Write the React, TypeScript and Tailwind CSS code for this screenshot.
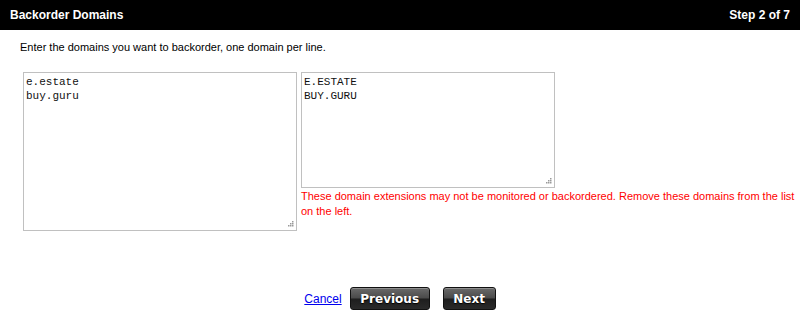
import React from 'react';

const Button: React.FC<{ label: string; width: string }> = ({ label, width }) => (
  <button
    type="button"
    className={`${width} h-[23px] rounded-[3px] border border-[#111] bg-[linear-gradient(to_bottom,#6a6a6a_0%,#4a4a4a_48%,#1e1e1e_52%,#2a2a2a_100%)] text-white text-[12px] font-bold leading-none shadow-[inset_0_1px_0_rgba(255,255,255,0.25)] [text-shadow:0_1px_1px_#000]`}
    style={{ fontFamily: '"DejaVu Sans", Verdana, sans-serif' }}
  >
    {label}
  </button>
);

// dotted resize grip, like the old Windows textarea corner
const Grip: React.FC = () => (
  <svg width="7" height="7" viewBox="0 0 7 7" className="absolute right-[3px] bottom-[3px] pointer-events-none">
    {[
      [5, 0],
      [3, 2],
      [5, 2],
      [1, 4],
      [3, 4],
      [5, 4],
    ].map(([x, y]) => (
      <rect key={`${x}-${y}`} x={x} y={y} width="1.5" height="1.5" fill="#9a9a9a" />
    ))}
  </svg>
);

const Box: React.FC<{ value: string; size: string }> = ({ value, size }) => (
  <div className={`relative ${size}`}>
    <textarea
      defaultValue={value}
      className="w-full h-full border border-[#c0c0c0] p-[2px] text-[11px] leading-[14px] text-[#111] outline-none resize-none block"
      style={{ fontFamily: '"Liberation Mono", "Courier New", monospace' }}
    />
    <Grip />
  </div>
);

const App: React.FC = () => {
  return (
    <div
      className="w-[800px] h-[318px] bg-white text-black"
      style={{ fontFamily: '"Liberation Sans", Arial, sans-serif' }}
    >
      {/* Header bar */}
      <div className="h-[30px] bg-black flex items-center justify-between px-[10px] text-white text-[12px] font-bold">
        <span>Backorder Domains</span>
        <span>Step 2 of 7</span>
      </div>

      <p className="pl-[20px] pt-[10px] text-[11px] leading-[14px]">
        Enter the domains you want to backorder, one domain per line.
      </p>

      <div className="flex items-start gap-[4px] pl-[23px] pt-[18px]">
        <Box value={'e.estate\nbuy.guru'} size="w-[274px] h-[159px]" />
        <div className="flex flex-col w-[497px]">
          <Box value={'E.ESTATE\nBUY.GURU'} size="w-[254px] h-[116px]" />
          <p className="text-[11px] leading-[15px] text-[#ff0000] mt-[1px]">
            These domain extensions may not be monitored or backordered. Remove these domains from the list on the left.
          </p>
        </div>
      </div>

      {/* Navigation */}
      <div className="flex items-center justify-center pt-[56px]">
        <a href="#" className="text-[12px] text-[#0000ee] underline mr-[8px]">
          Cancel
        </a>
        <Button label="Previous" width="w-[80px]" />
        <span className="w-[13px]" />
        <Button label="Next" width="w-[53px]" />
      </div>
    </div>
  );
};

export default App;
